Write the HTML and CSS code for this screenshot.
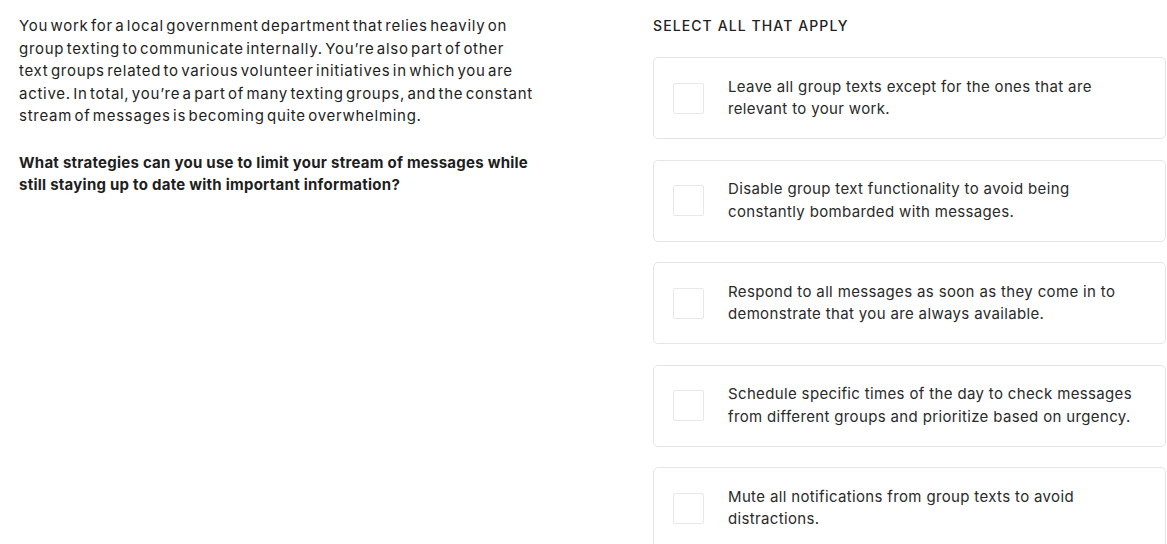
FILE: index.html
```html
<!DOCTYPE html>
<html lang="en">
<head>
<meta charset="utf-8">
<title>Question</title>
<link rel="stylesheet" href="styles.css">
</head>
<body>
<main class="question">
  <section class="prompt">
    <p class="scenario">You work for a local government department that relies heavily on group texting to communicate internally. You’re also part of other text groups related to various volunteer initiatives in which you are active. In total, you’re a part of many texting groups, and the constant stream of messages is becoming quite overwhelming.</p>
    <p class="ask">What strategies can you use to limit your stream of messages while still staying up to date with important information?</p>
  </section>
  <section class="answers">
    <h2 class="label">SELECT ALL THAT APPLY</h2>
    <ul class="options">
      <li class="option"><span class="box"></span><span class="text">Leave all group texts except for the ones that are relevant to your work.</span></li>
      <li class="option"><span class="box"></span><span class="text">Disable group text functionality to avoid being constantly bombarded with messages.</span></li>
      <li class="option"><span class="box"></span><span class="text">Respond to all messages as soon as they come in to demonstrate that you are always available.</span></li>
      <li class="option"><span class="box"></span><span class="text">Schedule specific times of the day to check messages from different groups and prioritize based on urgency.</span></li>
      <li class="option"><span class="box"></span><span class="text">Mute all notifications from group texts to avoid distractions.</span></li>
    </ul>
  </section>
</main>
</body>
</html>
```
FILE: styles.css
```css
* { box-sizing: border-box; }
html, body { margin: 0; padding: 0; background: #fff; }
body {
  font-family: Inter, "Liberation Sans", Arial, sans-serif;
  color: #1e1e1e;
  font-size: 15px;
  line-height: 22.5px;
  letter-spacing: 0.35px;
  overflow: hidden;
  height: 544px;
}
.question {
  display: grid;
  grid-template-columns: 515px 1fr;
  column-gap: 119px;
  padding: 15px 1px 0 19px;
}
.prompt p { margin: 0 0 24px; }
.prompt .scenario { letter-spacing: 0.72px; word-spacing: -2.5px; }
.prompt .ask { font-weight: 700; letter-spacing: 0.25px; }
.label {
  margin: 0 0 20px;
  font-size: 14px;
  font-weight: 500;
  line-height: 22px;
  color: #222;
  letter-spacing: 1.1px;
}
.options {
  list-style: none;
  margin: 0;
  padding: 0;
  display: flex;
  flex-direction: column;
  gap: 20.5px;
}
.option {
  display: flex;
  align-items: center;
  gap: 24px;
  min-height: 82px;
  padding: 17.5px 26px 17.5px 19px;
  border: 1px solid #e5e5e5;
  border-radius: 5px;
  color: #2a2a2a;
}
.box {
  flex: 0 0 31px;
  width: 31px;
  height: 31px;
  border: 1px solid #e8e8e8;
  border-radius: 2px;
}
.text { flex: 1; }
```
